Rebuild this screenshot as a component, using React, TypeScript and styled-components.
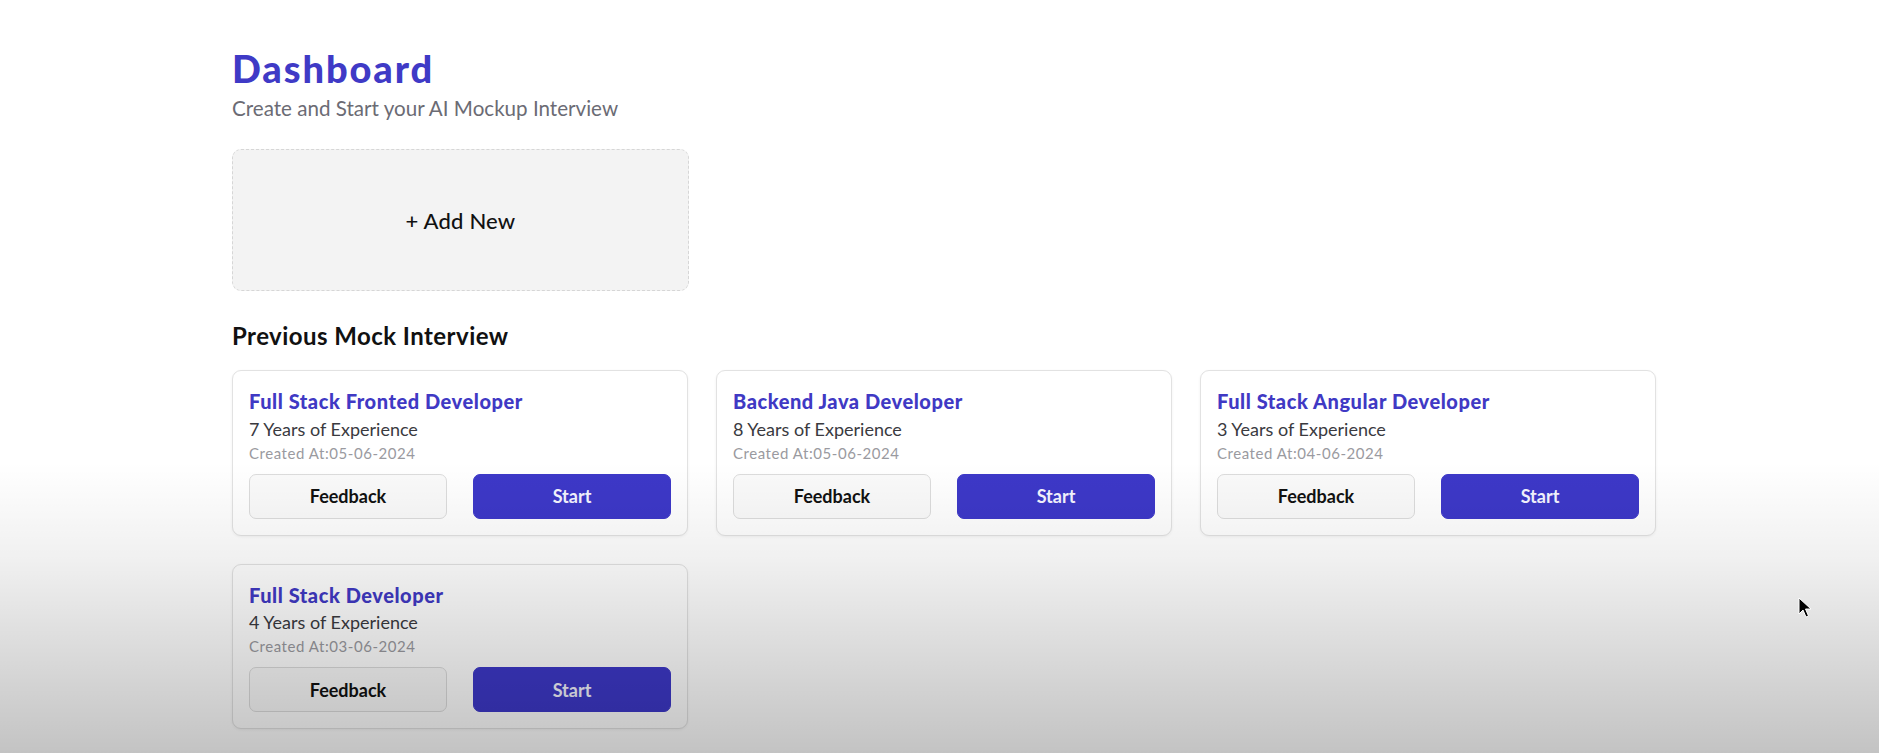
import React from "react";
import styled, { createGlobalStyle } from "styled-components";

const GlobalStyle = createGlobalStyle`
  * { box-sizing: border-box; }
  html, body { margin: 0; padding: 0; background: #ffffff; }
  body { font-family: "Lato", "Noto Sans", sans-serif; width: 1879px; height: 753px; overflow: hidden; }
`;

const Page = styled.main`
  position: relative;
  width: 1879px;
  height: 753px;
  padding: 45px 0 0 232px;
`;

const Content = styled.div`
  width: 1424px;
  display: flex;
  flex-direction: column;
`;

const Title = styled.h1`
  margin: 0;
  font-size: 38px;
  line-height: 46px;
  font-weight: 900;
  letter-spacing: 1.9px;
  color: #3f3ac6;
`;

const Subtitle = styled.p`
  margin: 5px 0 0;
  font-size: 20.6px;
  line-height: 25px;
  color: #6b6b74;
`;

const AddNew = styled.div`
  margin-top: 28px;
  width: 457px;
  height: 142px;
  background: #f3f3f3;
  border: 1.5px dashed #d6d6d6;
  border-radius: 9px;
  display: flex;
  align-items: center;
  justify-content: center;
  font-size: 22px;
  font-weight: 500;
  letter-spacing: 0.2px;
  color: #111;
`;

const SectionTitle = styled.h2`
  margin: 30px 0 0;
  font-size: 24px;
  line-height: 29px;
  font-weight: 700;
  letter-spacing: 0.45px;
  color: #111;
`;

const Grid = styled.div`
  margin-top: 20px;
  display: grid;
  grid-template-columns: repeat(3, 456px);
  gap: 28px;
`;

const Card = styled.div`
  background: #ffffff;
  border: 1px solid #e2e2e2;
  border-radius: 9px;
  box-shadow: 0 1px 3px rgba(0, 0, 0, 0.06);
  padding: 18px 16px 16px 16px;
  display: flex;
  flex-direction: column;
`;

const Role = styled.h3`
  margin: 0;
  font-size: 20px;
  line-height: 24px;
  font-weight: 900;
  letter-spacing: 0.55px;
  color: #4039c4;
`;

const Experience = styled.div`
  margin-top: 4.5px;
  font-size: 18px;
  line-height: 22px;
  color: #3a3a3f;
`;

const Created = styled.div`
  margin-top: 4px;
  font-size: 15px;
  line-height: 18px;
  letter-spacing: 0.55px;
  color: #9a9aa0;
`;

const Actions = styled.div`
  margin-top: 12px;
  display: grid;
  grid-template-columns: 1fr 1fr;
  gap: 26px;
`;

const Button = styled.button<{ $primary?: boolean }>`
  height: 45px;
  border-radius: 7px;
  font-family: inherit;
  font-size: 18px;
  font-weight: 700;
  cursor: pointer;
  border: 1px solid ${(p) => (p.$primary ? "#3d38c8" : "#dcdcdc")};
  background: ${(p) => (p.$primary ? "#3d38c8" : "#fafafa")};
  color: ${(p) => (p.$primary ? "#f4f4ff" : "#111")};
`;

const Vignette = styled.div`
  position: absolute;
  inset: 0;
  pointer-events: none;
  background: linear-gradient(
    to bottom,
    rgba(0, 0, 0, 0) 0px,
    rgba(0, 0, 0, 0) 462px,
    rgba(0, 0, 0, 0.06) 560px,
    rgba(0, 0, 0, 0.14) 650px,
    rgba(0, 0, 0, 0.235) 753px
  );
`;

const Cursor = styled.svg`
  position: absolute;
  left: 1798px;
  top: 597px;
  width: 14px;
  height: 22px;
  pointer-events: none;
`;

const interviews = [
  { role: "Full Stack Fronted Developer", years: 7, date: "05-06-2024" },
  { role: "Backend Java Developer", years: 8, date: "05-06-2024" },
  { role: "Full Stack Angular Developer", years: 3, date: "04-06-2024" },
  { role: "Full Stack Developer", years: 4, date: "03-06-2024" },
];

export default function App() {
  return (
    <>
      <GlobalStyle />
      <Page>
        <Content>
          <Title>Dashboard</Title>
          <Subtitle>Create and Start your AI Mockup Interview</Subtitle>
          <AddNew>+ Add New</AddNew>
          <SectionTitle>Previous Mock Interview</SectionTitle>
          <Grid>
            {interviews.map((it) => (
              <Card key={it.role}>
                <Role>{it.role}</Role>
                <Experience>{it.years} Years of Experience</Experience>
                <Created>Created At:{it.date}</Created>
                <Actions>
                  <Button>Feedback</Button>
                  <Button $primary>Start</Button>
                </Actions>
              </Card>
            ))}
          </Grid>
        </Content>
        <Vignette />
        <Cursor viewBox="0 0 14 22">
          <path d="M1 1 L1 17 L5 13 L8 20 L10.5 19 L7.5 12 L13 12 Z" fill="#000" stroke="#fff" strokeWidth="1" strokeLinejoin="round" />
        </Cursor>
      </Page>
    </>
  );
}
